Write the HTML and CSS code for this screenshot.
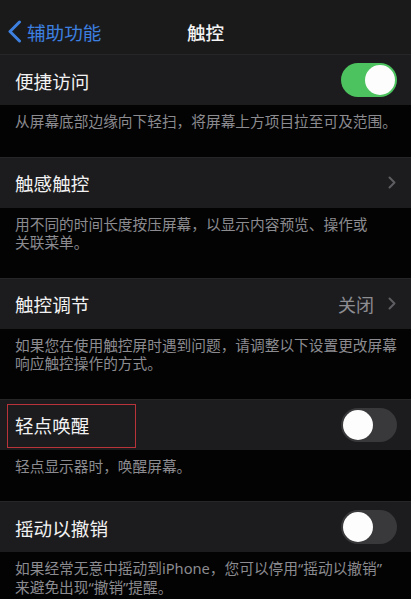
FILE: index.html
```
<!DOCTYPE html>
<html lang="zh-CN">
<head>
<meta charset="utf-8">
<title>触控</title>
<link rel="stylesheet" href="styles.css">
</head>
<body>
<div class="screen">
  <header class="nav">
    <div class="back">
      <svg class="back-icon" width="15" height="23" viewBox="0 0 15 23"><polyline points="12.5,2 3,11.5 12.5,21" fill="none" stroke="#3d80e0" stroke-width="3" stroke-linecap="round" stroke-linejoin="round"/></svg>
      <span>辅助功能</span>
    </div>
    <div class="title">触控</div>
    <div></div>
  </header>

  <div class="row">
    <span class="label">便捷访问</span>
    <span class="toggle on"><span class="knob"></span></span>
  </div>
  <p class="desc">从屏幕底部边缘向下轻扫，将屏幕上方项目拉至可及范围。</p>

  <div class="row">
    <span class="label">触感触控</span>
    <svg class="chev" width="8" height="13" viewBox="0 0 8 13"><polyline points="1.5,1.5 6.5,6.5 1.5,11.5" fill="none" stroke="#5e5e62" stroke-width="2" stroke-linecap="round" stroke-linejoin="round"/></svg>
  </div>
  <p class="desc">用不同的时间长度按压屏幕，以显示内容预览、操作或<br>关联菜单。</p>

  <div class="row">
    <span class="label">触控调节</span>
    <span class="value">关闭</span>
    <svg class="chev" width="8" height="13" viewBox="0 0 8 13"><polyline points="1.5,1.5 6.5,6.5 1.5,11.5" fill="none" stroke="#5e5e62" stroke-width="2" stroke-linecap="round" stroke-linejoin="round"/></svg>
  </div>
  <p class="desc">如果您在使用触控屏时遇到问题，请调整以下设置更改屏幕<br>响应触控操作的方式。</p>

  <div class="row">
    <span class="label">轻点唤醒</span>
    <span class="toggle"><span class="knob"></span></span>
    <span class="mark"></span>
  </div>
  <p class="desc">轻点显示器时，唤醒屏幕。</p>

  <div class="row">
    <span class="label">摇动以撤销</span>
    <span class="toggle"><span class="knob"></span></span>
  </div>
  <p class="desc">如果经常无意中摇动到iPhone，您可以停用“摇动以撤销”<br>来避免出现“撤销”提醒。</p>
</div>
</body>
</html>
```
FILE: styles.css
```
* { box-sizing: border-box; }
html, body {
  margin: 0;
  padding: 0;
  background: #030303;
}
body {
  font-family: "Noto Sans CJK SC", "Noto Sans", sans-serif;
  width: 411px;
  height: 599px;
  overflow: hidden;
}
.screen {
  display: flex;
  flex-direction: column;
}
.nav {
  height: 54px;
  padding-top: 8px;
  background: #1a1a1b;
  display: grid;
  grid-template-columns: 1fr auto 1fr;
  align-items: center;
}
.back {
  display: flex;
  align-items: center;
  gap: 5px;
  padding-left: 7px;
  color: #3d80e0;
  font-size: 18.6px;
}
.back-icon { flex: none; }
.title {
  color: #f4f4f4;
  font-size: 18.6px;
  font-weight: 500;
}
.row {
  position: relative;
  height: 51px;
  background: #1c1c1e;
  border-top: 1px solid #262628;
  display: flex;
  align-items: center;
  padding: 0 14px 0 15px;
}
.label {
  flex: 1;
  color: #f2f2f2;
  font-size: 18.6px;
}
.value {
  color: #8d8d92;
  font-size: 18px;
  margin-right: 14px;
}
.chev { flex: none; margin-right: 1px; }
.toggle {
  width: 56px;
  height: 34px;
  border-radius: 17px;
  background: #39393b;
  padding: 2px;
  display: flex;
  justify-content: flex-start;
}
.toggle.on {
  background: #4cc35f;
  justify-content: flex-end;
}
.knob {
  width: 30px;
  height: 30px;
  border-radius: 50%;
  background: #fdfdfd;
}
.desc {
  margin: 0;
  padding: 7px 15px 26px;
  color: #8b8b90;
  font-family: "Noto Sans", "Noto Sans CJK SC", sans-serif;
  font-size: 14.7px;
  line-height: 18.5px;
  white-space: nowrap;
}
.mark {
  position: absolute;
  left: 7px;
  top: 4px;
  width: 129px;
  height: 44px;
  border: 1px solid #b8333a;
}
```
